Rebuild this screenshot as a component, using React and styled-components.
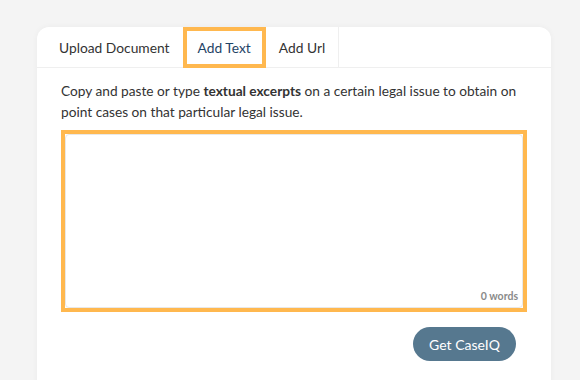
import { useState } from 'react'
import styled, { createGlobalStyle } from 'styled-components'

const GlobalStyle = createGlobalStyle`
  body {
    margin: 0;
    background-color: #f4f4f4;
    font-family: Lato, 'Open Sans', sans-serif;
  }
`

const tabs = ['Upload Document', 'Add Text', 'Add Url']

function App() {
  const [active, setActive] = useState(1)
  const [text, setText] = useState('')
  const words = text.trim() ? text.trim().split(/\s+/).length : 0

  return (
    <>
      <GlobalStyle />
      <Page>
        <Card>
          <TabBar>
            {tabs.map((t, i) => (
              <Tab
                key={t}
                $active={i === active}
                $last={i === tabs.length - 1}
                onClick={() => setActive(i)}
              >
                {t}
              </Tab>
            ))}
          </TabBar>
          <Body>
            <Intro>
              Copy and paste or type <b>textual excerpts</b> on a certain legal
              issue to obtain on point cases on that particular legal issue.
            </Intro>
            <Highlight>
              <TextArea value={text} onChange={(e) => setText(e.target.value)} />
              <WordCount>{words} words</WordCount>
            </Highlight>
            <Actions>
              <Button>Get CaseIQ</Button>
            </Actions>
          </Body>
        </Card>
      </Page>
    </>
  )
}

export default App

const Page = styled.div`
  padding: 27px 29px 0 37px;
  height: 353px;
  overflow: hidden;
`

const Card = styled.div`
  width: 514px;
  height: 380px;
  background-color: #fff;
  border-radius: 12px;
  box-shadow: 0 0 6px rgba(0, 0, 0, 0.04);
`

const TabBar = styled.div`
  display: flex;
  height: 40px;
  padding-left: 9px;
  border-bottom: 1px solid #efefef;
`

const Tab = styled.div`
  box-sizing: border-box;
  display: flex;
  align-items: center;
  padding: 0 ${(p) => (p.$active ? 11 : 13)}px;
  height: ${(p) => (p.$active ? '41px' : '40px')};
  font-size: 13.8px;
  color: ${(p) => (p.$active ? '#1f4466' : '#333')};
  border: ${(p) => (p.$active ? '4px solid #ffb84f' : 'none')};
  border-right: ${(p) =>
    p.$active ? '4px solid #ffb84f' : p.$last ? '1px solid #efefef' : 'none'};
  cursor: pointer;
`

const Body = styled.div`
  padding: 0 24px;
`

const Intro = styled.p`
  margin: 12px 0 0;
  font-size: 13.7px;
  line-height: 21px;
  color: #333;

  b {
    font-weight: 700;
  }
`

const Highlight = styled.div`
  position: relative;
  box-sizing: border-box;
  margin-top: 8px;
  height: 182px;
  border: 4px solid #ffb84f;
`

const TextArea = styled.textarea`
  display: block;
  box-sizing: border-box;
  width: 100%;
  height: 100%;
  border: 1px solid #e8e8e8;
  border-radius: 4px;
  resize: none;
  outline: none;
  font-family: inherit;
  font-size: 14px;
`

const WordCount = styled.span`
  position: absolute;
  right: 5px;
  bottom: 6px;
  font-size: 10.5px;
  font-weight: 700;
  color: #8a8a8a;
`

const Actions = styled.div`
  display: flex;
  justify-content: flex-end;
  padding-right: 11px;
  margin-top: 15px;
`

const Button = styled.button`
  width: 103px;
  height: 34px;
  border: none;
  border-radius: 17px;
  background-color: #56788f;
  color: #fff;
  font-family: inherit;
  font-size: 14px;
  cursor: pointer;
`
